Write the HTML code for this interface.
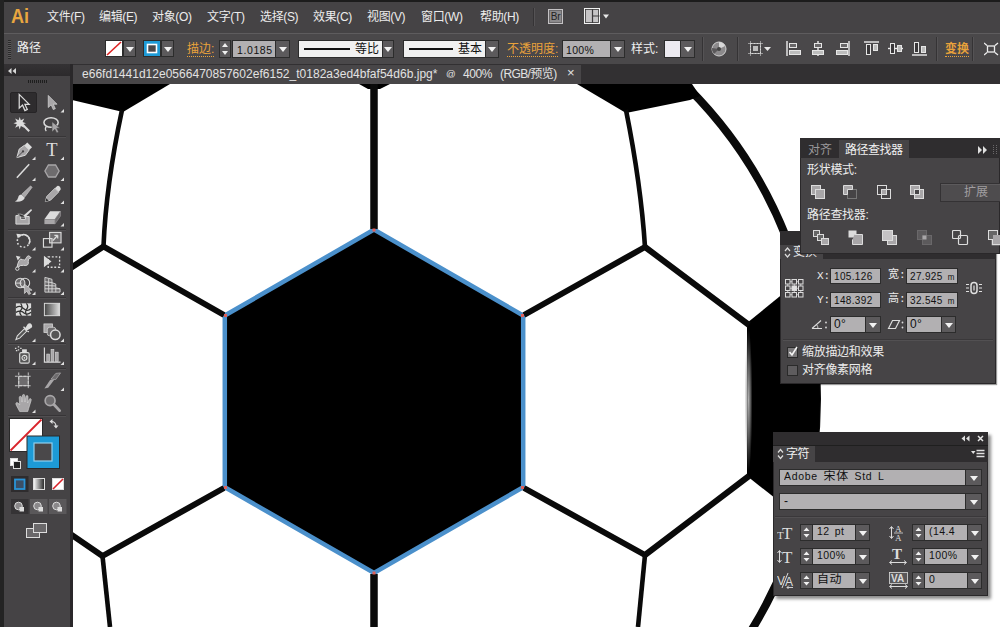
<!DOCTYPE html>
<html lang="zh"><head><meta charset="utf-8"><title>Adobe Illustrator</title>
<style>
*{box-sizing:border-box;margin:0;padding:0}
html,body{width:1000px;height:627px;overflow:hidden;background:#fff}
body{position:relative;font-family:"Liberation Sans","Noto Sans CJK SC",sans-serif;font-size:12px;color:#e6e6e6}
.abs{position:absolute}
.t{position:absolute;white-space:nowrap;line-height:16px}
#menubar{left:0;top:0;width:1000px;height:33px;background:#454345;border-top:2px solid #1c1c1c}
#ctrlbar{left:0;top:33px;width:1000px;height:31px;background:#4a484a;border-top:1px solid #5e5c5e}
#tabbar{left:0;top:64px;width:1000px;height:20px;background:#323032}
#doctab{left:73px;top:65px;width:508px;height:19px;background:#484648}
#leftedge{left:0;top:0;width:4px;height:627px;background:#232323}
#tools{left:4px;top:64px;width:66px;height:563px;background:#454345}
#toolshead{left:4px;top:64px;width:66px;height:12px;background:linear-gradient(#343234,#2c2a2c)}
#toolgap{left:70px;top:64px;width:3px;height:563px;background:#2a282a}
.or{color:#e9a23b;border-bottom:1px dotted #e9a23b;line-height:13px}
.inp{position:absolute;background:#b2b0b2;color:#111;border:1px solid #2c2c2c;white-space:nowrap;overflow:hidden}
.dd{position:absolute;background:#5c5a5c;border:1px solid #2c2c2c}
.dd:after{content:"";position:absolute;left:50%;top:50%;margin:-2px 0 0 -4px;border:4px solid transparent;border-top:5px solid #f2f2f2;border-bottom:0}
.sep{position:absolute;width:1px;background:#353335;border-right:1px solid #555355;box-sizing:content-box}
.panel{position:absolute;background:#464446;box-shadow:inset 0 0 0 1px #2a282a}
.m{top:9px;font-size:12px;color:#ececec;letter-spacing:-0.35px}
.lab{font:11px/16px 'Liberation Mono','Noto Sans CJK SC',monospace;color:#ececec}
.ss{display:inline-block;position:relative;top:0.5px;font:10px/14px 'Liberation Sans',sans-serif;letter-spacing:.35px;transform:scaleY(1.1);transform-origin:0 50%}
.ss b{display:inline-block;font:normal 12px/12px 'Noto Sans CJK SC',sans-serif;transform:scaleY(.9);vertical-align:-0.300px}
.tb{top:66px;font-size:12px;color:#e2e2e2}
</style></head><body>
<!--CANVAS-->
<svg class="abs" style="left:72px;top:84px" width="928" height="543" viewBox="72 84 928 543">
<defs><clipPath id="ball"><circle cx="377" cy="399" r="443"/></clipPath></defs>
<rect x="72" y="84" width="928" height="543" fill="#fff"/>
<circle cx="377" cy="399" r="440" fill="none" stroke="#0a0a0a" stroke-width="8"/>
<g fill="#000">
<polygon points="72,84 170,84 123,112 72,100"/>
<polygon points="577,84 692,84 700,96 690,100 626,113"/>
<polygon points="359,84 390,84 380,89 368,89"/>
<polygon clip-path="url(#ball)" points="747,323 795,284 840,284 840,510 790,510 747,476"/>
<polygon points="224.800,315.500 374,229.600 523.200,315.500 523.200,487.200 374,573 224.800,487.200" stroke="#4b90cb" stroke-width="4.500"/>
</g>
<g fill="none" stroke="#0a0a0a" stroke-width="6" stroke-linejoin="round">
<path d="M374,84V229M374,574V627" stroke-width="7.5"/>
<path d="M224,315L103.500,246.500L60,275"/>
<path d="M524,315L645,247L749,325"/>
<path d="M224,488L102.500,556L60,527"/>
<path d="M524,488L645,555L749,476"/>
<g stroke-width="4.600">
<path d="M122,110Q106,185 103.500,246.500"/>
<path d="M626,110Q641,185 645,247"/>
<path d="M102.500,556L110,627"/>
<path d="M645,555L638,627"/>
</g>
</g>
<defs><radialGradient id="hl"><stop offset="0" stop-color="#b8b8b8" stop-opacity=".95"/><stop offset=".5" stop-color="#9a9a9a" stop-opacity=".6"/><stop offset="1" stop-color="#888" stop-opacity="0"/></radialGradient></defs><ellipse cx="748.500" cy="400" rx="4" ry="72" fill="url(#hl)"/>
<g fill="#e0605a"><rect x="372.5" y="228.5" width="3" height="3"/><rect x="521" y="314" width="3" height="3"/><rect x="521" y="486" width="3" height="3"/><rect x="372.5" y="571.5" width="3" height="3"/><rect x="224" y="486" width="3" height="3"/><rect x="224" y="314" width="3" height="3"/></g>
</svg>
<!--CHROME-->
<div class="abs" id="menubar"></div>
<div class="abs" id="ctrlbar"></div>
<div class="abs" id="tabbar"></div>
<div class="abs" id="doctab"></div>
<div class="abs" id="tools"></div>
<div class="abs" id="toolshead"></div>
<div class="abs" id="toolgap"></div>
<div class="abs" id="leftedge"></div>
<!--MENU-->
<div class="t" style="left:11px;top:2.500px;font:bold 21px/26px 'Liberation Sans',sans-serif;color:#e8a640;transform:scaleX(.86);transform-origin:0 0">Ai</div>
<div class="t m" style="left:47px">文件(F)</div>
<div class="t m" style="left:99px">编辑(E)</div>
<div class="t m" style="left:152px">对象(O)</div>
<div class="t m" style="left:207px">文字(T)</div>
<div class="t m" style="left:260px">选择(S)</div>
<div class="t m" style="left:313px">效果(C)</div>
<div class="t m" style="left:367px">视图(V)</div>
<div class="t m" style="left:421px">窗口(W)</div>
<div class="t m" style="left:480px">帮助(H)</div>
<div class="sep" style="left:533px;top:8px;height:18px"></div>
<div class="abs" style="left:548px;top:9px;width:15px;height:15px;background:#8c8a8c;border:1px solid #c4c2c4;box-shadow:inset 0 0 0 1px #6a686a;color:#222;font:10px/13px 'Liberation Sans',sans-serif;text-align:center;letter-spacing:-0.3px">Br</div>
<svg class="abs" style="left:584px;top:8px" width="28" height="17" viewBox="0 0 28 17"><rect x="0.500" y="0.500" width="15" height="15" fill="#c6c4c6" stroke="#f2f2f2"/><path d="M8.500,1v14M8.500,8h7" stroke="#3a383a" stroke-width="1.200"/><rect x="1.500" y="1.500" width="13" height="13" fill="none" stroke="#3a383a" stroke-width="0.800"/><path d="M19,6.500h6l-3,4z" fill="#e8e8e8"/></svg>
<!--CTRL-->
<div class="abs" style="left:8px;top:40px;width:3px;height:19px;background:repeating-linear-gradient(#2a2a2a 0 1px,#5a585a 1px 2px)"></div>
<div class="t" style="left:17px;top:40px;font-size:12px;color:#f0f0f0">路径</div>
<svg class="abs" style="left:105px;top:40px" width="18" height="17"><rect x="0.5" y="0.5" width="17" height="16" fill="#fff" stroke="#2c2c2c"/><path d="M2,15L16,2" stroke="#d22" stroke-width="1.6"/></svg>
<div class="dd" style="left:123px;top:40px;width:13px;height:17px"></div>
<svg class="abs" style="left:143px;top:40px" width="18" height="17"><rect x="0.5" y="0.5" width="17" height="16" fill="#1d9ad6" stroke="#2c2c2c"/><rect x="4.5" y="4.5" width="9" height="8" fill="#4a484a" stroke="#fff" stroke-width="1.6"/></svg>
<div class="dd" style="left:161px;top:40px;width:13px;height:17px"></div>
<div class="t or" style="left:187px;top:43px">描边:</div>
<div class="abs" style="left:219px;top:40px;width:12px;height:18px;background:#5c5a5c;border:1px solid #2c2c2c"></div>
<svg class="abs" style="left:219px;top:40px" width="12" height="18"><path d="M3,7l3,-4l3,4zM3,11l3,4l3,-4z" fill="#f0f0f0"/></svg>
<div class="inp" style="left:232px;top:40px;width:44px;height:18px;padding-left:4px;line-height:16px"><span class="ss" style="font-size:10.500px;letter-spacing:.6px">1.0185</span></div>
<div class="dd" style="left:275px;top:40px;width:15px;height:18px"></div>
<div class="inp" style="left:298px;top:40px;width:85px;height:18px;background:#f0f0f0"><i class="abs" style="left:5px;top:7px;width:46px;height:2px;background:#111"></i><span class="t" style="left:56px;top:0;color:#111;font-size:12px">等比</span></div>
<div class="dd" style="left:382px;top:40px;width:12px;height:18px"></div>
<div class="inp" style="left:403px;top:40px;width:83px;height:18px;background:#f0f0f0"><i class="abs" style="left:5px;top:7px;width:44px;height:2px;background:#111"></i><span class="t" style="left:54px;top:0;color:#111;font-size:12px">基本</span></div>
<div class="dd" style="left:485px;top:40px;width:14px;height:18px"></div>
<div class="t or" style="left:507px;top:43px">不透明度:</div>
<div class="inp" style="left:562px;top:40px;width:49px;height:18px;line-height:16px;padding-left:3px"><span class="ss" style="font-size:10.500px;letter-spacing:.3px">100%</span></div>
<div class="dd" style="left:610px;top:40px;width:15px;height:18px"></div>
<div class="t" style="left:631px;top:41px;color:#f0f0f0">样式:</div>
<div class="inp" style="left:664px;top:40px;width:17px;height:18px;background:#eceaf0"></div>
<div class="dd" style="left:680px;top:40px;width:15px;height:18px"></div>
<div class="sep" style="left:702px;top:37px;height:24px"></div>
<svg class="abs" style="left:711px;top:41px" width="16" height="16"><circle cx="8" cy="8" r="7" fill="#8c8a8c" stroke="#cfcfcf" stroke-width="1"/><path d="M8,8L8,1A7,7 0 0 1 14,5z" fill="#d8d8d8"/><path d="M8,8L3,13A7,7 0 0 1 1,7z" fill="#5a585a"/><circle cx="8" cy="8" r="2" fill="#444"/></svg>
<div class="sep" style="left:737px;top:37px;height:24px"></div>
<svg class="abs" style="left:748px;top:41px" width="24" height="16"><rect x="2.5" y="2.5" width="10" height="10" fill="none" stroke="#e6e6e6" stroke-dasharray="2 1"/><rect x="5" y="5" width="5" height="5" fill="#bdbdbd"/><path d="M0,2.5h15M0,12.5h15M2.5,0v15M12.5,0v15" stroke="#d0d0d0" stroke-width="0.6"/><path d="M16,6h7l-3.5,4z" fill="#e8e8e8"/></svg>
<svg class="abs" style="left:786px;top:41px" width="16" height="16"><path d="M1,0v15" stroke="#eee" stroke-width="1.4"/><rect x="3.5" y="2.5" width="7" height="4" fill="#6a686a" stroke="#e6e6e6"/><rect x="3.5" y="9.500" width="11" height="4" fill="#bdbdbd" stroke="#e6e6e6"/></svg>
<svg class="abs" style="left:811px;top:41px" width="14" height="16"><path d="M7,0v15" stroke="#eee" stroke-width="1.4"/><rect x="3.500" y="2.500" width="7" height="4" fill="#6a686a" stroke="#e6e6e6"/><rect x="1.500" y="9.500" width="11" height="4" fill="#bdbdbd" stroke="#e6e6e6"/></svg>
<svg class="abs" style="left:835px;top:41px" width="16" height="16"><path d="M14,0v15" stroke="#eee" stroke-width="1.4"/><rect x="5.500" y="2.500" width="7" height="4" fill="#6a686a" stroke="#e6e6e6"/><rect x="1.500" y="9.500" width="11" height="4" fill="#bdbdbd" stroke="#e6e6e6"/></svg>
<svg class="abs" style="left:864px;top:41px" width="16" height="16"><path d="M0,1h15" stroke="#eee" stroke-width="1.4"/><rect x="2.500" y="3.500" width="4" height="10" fill="#3a383a" stroke="#e6e6e6"/><rect x="9.500" y="3.500" width="4" height="6" fill="#bdbdbd" stroke="#e6e6e6"/></svg>
<svg class="abs" style="left:888px;top:41px" width="16" height="16"><path d="M0,7.500h15" stroke="#eee" stroke-width="1.400"/><rect x="2.500" y="2.500" width="4" height="10" fill="#3a383a" stroke="#e6e6e6"/><rect x="9.500" y="4.500" width="4" height="6" fill="#bdbdbd" stroke="#e6e6e6"/></svg>
<svg class="abs" style="left:912px;top:41px" width="16" height="16"><path d="M0,14h15" stroke="#eee" stroke-width="1.400"/><rect x="2.500" y="1.500" width="4" height="10" fill="#3a383a" stroke="#e6e6e6"/><rect x="9.500" y="5.500" width="4" height="6" fill="#bdbdbd" stroke="#e6e6e6"/></svg>
<div class="sep" style="left:936px;top:37px;height:24px"></div>
<div class="t or" style="left:945px;top:43px;font-weight:bold">变换</div>
<div class="sep" style="left:972px;top:37px;height:24px"></div>
<svg class="abs" style="left:984px;top:42px" width="16" height="14"><rect x="3.500" y="4" width="7" height="6" fill="none" stroke="#eee" stroke-width="1.300"/><path d="M0,1l3,2.500M14,1l-3,2.500M0,13l3,-2.500M14,13l-3,-2.500" stroke="#eee" stroke-width="1.300"/></svg>
<!--TAB-->
<div class="t tb" id="tabtxt" style="left:82px;letter-spacing:0.02px">e66fd1441d12e0566470857602ef6152_t0182a3ed4bfaf54d6b.jpg*</div>
<div class="t tb" style="left:446px;font-size:9.500px">@</div>
<div class="t tb" style="left:463px;letter-spacing:-0.4px">400%</div>
<div class="t tb" id="tabtxt2" style="left:500px;letter-spacing:-0.6px">(RGB/预览)</div>
<div class="t" style="left:567px;top:65px;font-size:13px;color:#e2e2e2">×</div>
<!--TOOLS-->
<svg class="abs" style="left:0;top:64px" width="73" height="563" viewBox="0 64 73 563">
<path d="M8,71l3.500,-3v6zM12.500,71l3.500,-3v6z" fill="#d8d8d8"/>
<path d="M28,81.500h19" stroke="#1e1e1e" stroke-width="3" stroke-dasharray="1 1"/>
<rect x="10.500" y="92.500" width="26" height="20" rx="1.500" fill="#2e2c2e" stroke="#262426"/>
<path d="M8,136.5h58" stroke="#373537"/><path d="M8,137.5h58" stroke="#514f51"/>
<path d="M8,229.5h58" stroke="#373537"/><path d="M8,230.5h58" stroke="#514f51"/>
<path d="M8,297.5h58" stroke="#373537"/><path d="M8,298.5h58" stroke="#514f51"/>
<path d="M8,343.5h58" stroke="#373537"/><path d="M8,344.5h58" stroke="#514f51"/>
<path d="M8,368.5h58" stroke="#373537"/><path d="M8,369.5h58" stroke="#514f51"/>
<path d="M8,415.5h58" stroke="#373537"/><path d="M8,416.5h58" stroke="#514f51"/>
<g transform="translate(23.5,102.5) scale(0.95)"><path d="M-4.5,-8.500L-4.500,6L-1,2.800L1.500,8.500L4,7.400L1.500,2L6,2Z" fill="#2e2c2e" stroke="#dcdcdc" stroke-width="1.300" stroke-linejoin="miter"/></g>
<g transform="translate(52,102.5) scale(0.95)"><path transform="scale(.88)" d="M-4.500,-8.500L-4.500,6L-1,2.800L1.500,8.500L4,7.400L1.500,2L6,2Z" fill="#a8a6a8" stroke="#dcdcdc" stroke-width="0.800"/></g>
<path d="M64,109.0v3.500h-3.500z" fill="#e0e0e0"/>
<g transform="translate(23.5,124.5) scale(0.95)"><path d="M-2,-1L6,7" stroke="#dcdcdc" stroke-width="2.200"/><path d="M-4,-3m0,-5.500l1.200,3.600l3.600,-1.800l-1.800,3.600l3.600,1.200l-3.600,1.200l1.800,3.600l-3.600,-1.800l-1.200,3.600l-1.200,-3.600l-3.600,1.800l1.800,-3.600l-3.600,-1.200l3.600,-1.200l-1.800,-3.600l3.600,1.800z" fill="#dcdcdc" transform="scale(1) translate(0,0.500)"/></g>
<g transform="translate(52,124.5) scale(0.95)"><ellipse cx="-1" cy="-2" rx="7.500" ry="5" fill="none" stroke="#dcdcdc" stroke-width="1.600"/><path d="M-6,2q-2,3 0,5" fill="none" stroke="#dcdcdc" stroke-width="1.300"/><path d="M0,-3L0,8L3,5L5,9L7,8L5,4L8.500,4Z" fill="#a8a6a8" stroke="#454345" stroke-width="0.600"/></g>
<g transform="translate(23.5,150) scale(0.95)"><path d="M-7,8L-4.500,-1L1,-5L6,0L2,5.500Z" fill="#a8a6a8" stroke="#dcdcdc" stroke-width="1"/><path d="M1,-5L4,-8L9,-3L6,0Z" fill="#dcdcdc"/><path d="M-7,8L-1,2" stroke="#454345" stroke-width="1"/><circle cx="-0.500" cy="1.500" r="1.200" fill="#454345"/></g>
<path d="M35.5,156.5v3.500h-3.500z" fill="#e0e0e0"/>
<g transform="translate(52,150) scale(0.95)"><text x="0" y="6.500" text-anchor="middle" font-family="Liberation Serif,serif" font-size="19.500" fill="#dcdcdc">T</text></g>
<path d="M64,156.5v3.500h-3.500z" fill="#e0e0e0"/>
<g transform="translate(23.5,171) scale(0.95)"><path d="M-7,7L6,-7" stroke="#dcdcdc" stroke-width="1.600"/></g>
<path d="M35.5,177.5v3.500h-3.500z" fill="#e0e0e0"/>
<g transform="translate(52,171) scale(0.95)"><path transform="scale(.88)" d="M-8.500,0L-4.300,-7.200L4.300,-7.200L8.500,0L4.300,7.200L-4.300,7.200Z" fill="#6e6c6e" stroke="#a8a6a8" stroke-width="1.600"/></g>
<path d="M64,177.5v3.500h-3.500z" fill="#e0e0e0"/>
<g transform="translate(23.5,194) scale(0.95)"><path d="M7.500,-8.500L-1.500,0L1.500,3L9,-7Z" fill="#a8a6a8" stroke="#dcdcdc" stroke-width="0.600"/><path d="M-2,0.500L1.500,4Q-1,9 -9,8Q-6,6.500 -5.500,3.500Q-5,0.500 -2,0.500Z" fill="#dcdcdc"/></g>
<g transform="translate(52,194) scale(0.95)"><path d="M-7,8L-5.500,2.500L3,-6L7,-2L-1.500,6.500Z" fill="#a8a6a8" stroke="#dcdcdc" stroke-width="0.800"/><path d="M3,-6L5.500,-8.500Q7,-9 8.500,-7.500Q9.500,-6 9,-4.500L7,-2Z" fill="#dcdcdc"/><path d="M-7,8L-6,4.500L-3.500,7Z" fill="#333"/></g>
<path d="M64,200.5v3.500h-3.500z" fill="#e0e0e0"/>
<g transform="translate(23.5,216.5) scale(0.95)"><path d="M-8,-1L-8,8L6,8L6,0L2,0L2,3L-3,3L-3,-1Z" fill="#a8a6a8" stroke="#dcdcdc" stroke-width="1"/><path d="M8,-8L0,-1L1.500,1L9,-6.500Z" fill="#dcdcdc"/><path d="M0,-1.500Q-3,-3 -6,-2.500Q-3,2 1.500,1Z" fill="#333" stroke="#dcdcdc" stroke-width="0.600"/></g>
<g transform="translate(52,216.5) scale(0.95)"><path d="M-8,3L-2,-5.500L9,-5.500L3,3Z" fill="#dcdcdc"/><path d="M-8,3L3,3L3,8L-8,8Z" fill="#a8a6a8"/><path d="M3,3L9,-5.500L9,-0.500L3,8Z" fill="#6e6c6e" stroke="#a8a6a8" stroke-width="0.500"/></g>
<path d="M64,223.0v3.500h-3.500z" fill="#e0e0e0"/>
<g transform="translate(23.5,240.5) scale(0.95)"><circle cx="0" cy="0.500" r="6.500" fill="none" stroke="#dcdcdc" stroke-width="1.600" stroke-dasharray="1.800 2.200"/><path d="M-4,-4.700A6.500,6.500 0 0 1 5.600,3.800" fill="none" stroke="#dcdcdc" stroke-width="1.700"/><path d="M-7.500,-7L-2.500,-6.500L-6,-2Z" fill="#dcdcdc"/></g>
<path d="M35.5,247.0v3.500h-3.500z" fill="#e0e0e0"/>
<g transform="translate(52,240.5) scale(0.95)"><rect x="-2.500" y="-8.500" width="12" height="11" fill="#6e6c6e" stroke="#dcdcdc" stroke-width="1.200"/><rect x="-9" y="-2" width="9" height="9" fill="none" stroke="#dcdcdc" stroke-width="1.200"/><path d="M1,0L6,-5.500M6,-5.500h-3.500M6,-5.500v3.500" stroke="#dcdcdc" stroke-width="1.300" fill="none"/></g>
<path d="M64,247.0v3.500h-3.500z" fill="#e0e0e0"/>
<g transform="translate(23.5,262.5) scale(0.95)"><path d="M-7,6Q-5,-6 -1,-3Q2,-1 3,-5Q5,-9 8,-5Q4,-4 5,-1Q6,4 0,3Q-3,2 -7,6Z" fill="#a8a6a8" stroke="#dcdcdc" stroke-width="1"/><circle cx="-6.500" cy="6.500" r="1.800" fill="#454345" stroke="#dcdcdc" stroke-width="1"/><path d="M-8,-7l2,5l3,-4z" fill="#dcdcdc"/></g>
<path d="M35.5,269.0v3.500h-3.500z" fill="#e0e0e0"/>
<g transform="translate(52,262.5) scale(0.95)"><rect x="-4" y="-6" width="12" height="11" fill="none" stroke="#dcdcdc" stroke-width="1.400" stroke-dasharray="2 1.800"/><path d="M-8.500,-7L-8.500,5L-5.500,2.500L-0.500,-1Z" fill="#dcdcdc"/></g>
<path d="M64,269.0v3.500h-3.500z" fill="#e0e0e0"/>
<g transform="translate(23.5,285) scale(0.95)"><circle cx="-3.500" cy="-2" r="5" fill="#6e6c6e" stroke="#dcdcdc" stroke-width="1.100"/><circle cx="1.500" cy="-2" r="5" fill="none" stroke="#dcdcdc" stroke-width="1.100"/><path d="M-8,-2h6" stroke="#dcdcdc" stroke-width="1"/><path d="M1,-1L1,9L3.500,6.500L5.500,10L7.500,9L5.500,5.500L9,5.500Z" fill="#a8a6a8" stroke="#dcdcdc" stroke-width="0.700"/></g>
<path d="M35.5,291.5v3.500h-3.500z" fill="#e0e0e0"/>
<g transform="translate(52,285) scale(0.95)"><path d="M-7.500,-8V7.500H8.500L8.500,4L4,3V-1L0,-2.500V-6L-3.500,-7Z" fill="#6e6c6e" stroke="#dcdcdc" stroke-width="0.900"/><path d="M-3.500,-7V7.500M0,-2.500V7.500M4,3V7.500M-7.500,-3.500L0,-2.500M-7.500,0.500L4,1M-7.500,4L8.500,4" stroke="#dcdcdc" stroke-width="0.900" fill="none"/></g>
<path d="M64,291.5v3.500h-3.500z" fill="#e0e0e0"/>
<g transform="translate(23.5,309.5) scale(0.95)"><rect x="-8" y="-6.500" width="16" height="13" fill="#dcdcdc"/><path d="M-8,-2Q-3,-5 0,-1Q4,3 8,-1M-8,3Q-3,0 1,4Q4,6 8,3M-3,-6.500Q0,-2 -3,1Q-5,4 -2,6.500M3,-6.500Q6,-3 3,0Q1,3 4,6.500" fill="none" stroke="#333" stroke-width="1.300"/></g>
<g transform="translate(52,309.5) scale(0.95)"><defs><linearGradient id="gg" x1="0" x2="1"><stop offset="0" stop-color="#444"/><stop offset="1" stop-color="#ddd"/></linearGradient></defs><rect x="-8" y="-6.500" width="16" height="13" fill="url(#gg)" stroke="#dcdcdc" stroke-width="1"/></g>
<g transform="translate(23.5,332) scale(0.95)"><path d="M-8,8L-6.500,4L1,-3.500L3.500,-1L-4,6.500Z" fill="#555" stroke="#dcdcdc" stroke-width="1.100"/><path d="M0,-5.500L5.500,0M2,-3L5,-8Q7,-9 8,-7.500Q9,-6 8,-5L3,-2Z" fill="#dcdcdc" stroke="#dcdcdc" stroke-width="1.400"/></g>
<path d="M35.5,338.5v3.500h-3.500z" fill="#e0e0e0"/>
<g transform="translate(52,332) scale(0.95)"><rect x="-8.500" y="-8.500" width="9" height="9" fill="#a8a6a8" stroke="#dcdcdc" stroke-width="0.800"/><rect x="-5" y="-5" width="9" height="9" rx="2.500" fill="#6e6c6e" stroke="#dcdcdc" stroke-width="0.800"/><circle cx="3.500" cy="3" r="5" fill="#555" stroke="#dcdcdc" stroke-width="1.600"/></g>
<path d="M64,338.5v3.500h-3.500z" fill="#e0e0e0"/>
<g transform="translate(23.5,355) scale(0.95)"><rect x="-4" y="-2.500" width="10" height="11" rx="1.500" fill="#555" stroke="#dcdcdc" stroke-width="1.200"/><rect x="-1.500" y="-6" width="5" height="3.500" fill="#dcdcdc"/><circle cx="1" cy="3" r="2.600" fill="none" stroke="#dcdcdc" stroke-width="1.200"/><circle cx="1" cy="3" r="0.900" fill="#dcdcdc"/><path d="M-9,-7h1.500M-6,-8.500h1.500M-6,-5.500h1.500M-3.500,-7h1.500M-8,-4.500h1.500" stroke="#dcdcdc" stroke-width="1.300"/></g>
<path d="M35.5,361.5v3.500h-3.500z" fill="#e0e0e0"/>
<g transform="translate(52,355) scale(0.95)"><path d="M-8,-8V7.500H9" fill="none" stroke="#dcdcdc" stroke-width="1.200"/><rect x="-5.500" y="-1" width="3" height="8" fill="#a8a6a8" stroke="#dcdcdc" stroke-width="0.600"/><rect x="-1" y="-6" width="3" height="13" fill="#a8a6a8" stroke="#dcdcdc" stroke-width="0.600"/><rect x="3.500" y="-3" width="3" height="10" fill="#a8a6a8" stroke="#dcdcdc" stroke-width="0.600"/></g>
<path d="M64,361.5v3.500h-3.500z" fill="#e0e0e0"/>
<g transform="translate(23.5,381) scale(0.95)"><rect x="-5" y="-5" width="10" height="10" fill="#6e6c6e" stroke="#dcdcdc" stroke-width="0.800"/><path d="M-9,-5h18M-9,5h18M-5,-9v18M5,-9v18" stroke="#dcdcdc" stroke-width="0.900" stroke-dasharray="3 1.500"/></g>
<g transform="translate(52,381) scale(0.95)"><path d="M-8,8L-2,-1L3,-2L-4,7Z" fill="#a8a6a8"/><path d="M-1,-2L4,-8L9,-8.500L4,-1.500Z" fill="#6e6c6e" stroke="#a8a6a8" stroke-width="0.800"/></g>
<path d="M64,387.5v3.500h-3.500z" fill="#e0e0e0"/>
<g transform="translate(23.5,403) scale(0.95)"><path d="M-4,9L-7.500,2.500Q-9,0 -7,-0.500Q-5.500,-0.500 -4,2L-4.500,-5.500Q-4.500,-7 -3.300,-7Q-2.200,-7 -2,-5.500L-1.500,-1L-1.200,-7.500Q-1,-9 0.200,-9Q1.300,-9 1.300,-7.500L1.500,-1L2.500,-6.500Q2.800,-8 4,-7.800Q5,-7.500 4.800,-6L4.300,0L5.800,-3.500Q6.500,-5 7.500,-4.500Q8.500,-4 8,-2.500L5.500,5.500L4.500,9Z" fill="#a8a6a8" stroke="#dcdcdc" stroke-width="0.600"/></g>
<path d="M35.5,409.5v3.500h-3.500z" fill="#e0e0e0"/>
<g transform="translate(52,403) scale(0.95)"><circle cx="-2" cy="-2.500" r="5.200" fill="#6e6c6e" stroke="#a8a6a8" stroke-width="1.800"/><path d="M2,1.500L8,8" stroke="#a8a6a8" stroke-width="3" stroke-linecap="round"/></g>
<rect x="9.500" y="418.500" width="33" height="33" fill="#fff" stroke="#2a2a2a"/><path d="M10.500,450.500L41.500,419.500" stroke="#d9232a" stroke-width="1.800"/>
<rect x="27" y="436" width="32.500" height="32.500" fill="#1d9ad6" stroke="#2a2a2a"/><rect x="34" y="443" width="18" height="18" fill="#4a484a" stroke="#8fd0ee" stroke-width="1.200"/>
<path d="M51,421.500q5,0 5,5" fill="none" stroke="#ddd" stroke-width="1.200"/><path d="M49.500,421.500l3,-2.500v5zM56,428.500l-2.500,-3h5z" fill="#ddd"/>
<rect x="10.500" y="458.500" width="7" height="7" fill="#fff" stroke="#ddd"/><rect x="13.500" y="461.500" width="7" height="7" fill="#222" stroke="#ddd"/>
<rect x="11" y="476" width="17.500" height="16" fill="#2e2c2e"/><rect x="15" y="479.500" width="9.500" height="9.500" fill="#3b4f66" stroke="#2a94d8" stroke-width="1.800"/>
<defs><linearGradient id="g2" x1="0" x2="1"><stop offset="0" stop-color="#fff"/><stop offset="1" stop-color="#222"/></linearGradient></defs><rect x="33.500" y="478.500" width="11" height="11" fill="url(#g2)" stroke="#ddd"/>
<rect x="52.500" y="478.500" width="11" height="11" fill="#fff" stroke="#ddd"/><path d="M53,489L63,479" stroke="#d9232a" stroke-width="1.600"/>
<rect x="11" y="499" width="17.500" height="15" fill="#353335"/><rect x="30" y="499" width="17.500" height="15" fill="#5a585a"/><rect x="49" y="499" width="17.500" height="15" fill="#5a585a"/>
<circle cx="18.5" cy="506" r="3.800" fill="#8a888a" stroke="#ddd" stroke-width="1"/><rect x="19.5" y="507" width="4.500" height="4.500" fill="#ddd"/>
<circle cx="37.5" cy="506" r="3.800" fill="#8a888a" stroke="#ddd" stroke-width="1"/><rect x="38.5" y="507" width="4.500" height="4.500" fill="#ddd"/>
<circle cx="56.5" cy="506" r="3.800" fill="#8a888a" stroke="#ddd" stroke-width="1"/><rect x="57.5" y="507" width="4.500" height="4.500" fill="#ddd"/>
<rect x="26.500" y="528.500" width="13" height="9" fill="#6a686a" stroke="#ddd"/><rect x="33.500" y="523.500" width="13" height="9" fill="#6a686a" stroke="#ddd"/>
</svg>
<!--PANELS-->
<div class="panel" style="left:780px;top:231px;width:216px;height:153px;box-shadow:inset 0 0 0 1px #2a282a,1px 1px 1px rgba(0,0,0,.4)"></div>
<div class="abs" style="left:780px;top:231px;width:216px;height:28px;background:#2f2d2f"></div>
<div class="abs" style="left:780px;top:245px;width:43px;height:14px;background:#464446"></div>
<svg class="abs" style="left:784px;top:247px" width="7" height="11"><path d="M1,4l2.500,-3l2.500,3M1,7l2.500,3l2.500,-3" fill="none" stroke="#ddd" stroke-width="1.200"/></svg>
<div class="t" style="left:793px;top:244px;font-size:12px;color:#e8e8e8">变换</div>
<svg class="abs" style="left:784px;top:278px" width="21" height="21"><rect x="1.5" y="1.5" width="4.500" height="4.500" fill="none" stroke="#dcdcdc" stroke-width="1"/><rect x="8.0" y="1.5" width="4.500" height="4.500" fill="none" stroke="#dcdcdc" stroke-width="1"/><rect x="14.5" y="1.5" width="4.500" height="4.500" fill="none" stroke="#dcdcdc" stroke-width="1"/><rect x="1.5" y="8.0" width="4.500" height="4.500" fill="none" stroke="#dcdcdc" stroke-width="1"/><rect x="8.0" y="8.0" width="4.500" height="4.500" fill="#e0e0e0" stroke="#dcdcdc" stroke-width="1"/><rect x="14.5" y="8.0" width="4.500" height="4.500" fill="none" stroke="#dcdcdc" stroke-width="1"/><rect x="1.5" y="14.5" width="4.500" height="4.500" fill="none" stroke="#dcdcdc" stroke-width="1"/><rect x="8.0" y="14.5" width="4.500" height="4.500" fill="none" stroke="#dcdcdc" stroke-width="1"/><rect x="14.5" y="14.5" width="4.500" height="4.500" fill="none" stroke="#dcdcdc" stroke-width="1"/><path d="M6,3.750h2M12.500,3.750h2M6,10.250h2M12.500,10.250h2M6,16.750h2M12.500,16.750h2M3.750,6v2M3.750,12.500v2M10.250,6v2M10.250,12.500v2M16.750,6v2M16.750,12.500v2" stroke="#dcdcdc" stroke-width="0.800"/></svg>
<div class="t lab" style="left:817px;top:268px">X:</div>
<div class="inp" style="left:830px;top:268px;width:51px;height:16px;font:10px/14px 'Liberation Mono',monospace;padding-left:3px"><span class="ss">105.126</span></div>
<div class="t lab" style="left:888px;top:267px">宽:</div>
<div class="inp" style="left:906px;top:268px;width:52px;height:16px;font:10px/14px 'Liberation Mono',monospace;padding-left:3px"><span class="ss" style="word-spacing:2px">27.925 <span style="font-size:8px">m</span></span></div>
<div class="t lab" style="left:817px;top:292px">Y:</div>
<div class="inp" style="left:830px;top:292px;width:51px;height:16px;font:10px/14px 'Liberation Mono',monospace;padding-left:3px"><span class="ss">148.392</span></div>
<div class="t lab" style="left:888px;top:291px">高:</div>
<div class="inp" style="left:906px;top:292px;width:52px;height:16px;font:10px/14px 'Liberation Mono',monospace;padding-left:3px"><span class="ss" style="word-spacing:2px">32.545 <span style="font-size:8px">m</span></span></div>
<svg class="abs" style="left:965px;top:280px" width="18" height="16"><rect x="6" y="2.500" width="6" height="11" rx="3" fill="none" stroke="#e0e0e0" stroke-width="1.500"/><path d="M9,5.500v5" stroke="#e0e0e0" stroke-width="1.200"/><path d="M1,4.500h3M1,8h3M1,11.500h3M14,4.500h3M14,8h3M14,11.500h3" stroke="#e0e0e0" stroke-width="1.100"/></svg>
<svg class="abs" style="left:811px;top:318px" width="18" height="12"><path d="M1,10.500L10,2.500M1,10.500H11" fill="none" stroke="#dcdcdc" stroke-width="1.100"/><path d="M7,10.500A6,6 0 0 0 5.500,6.500" fill="none" stroke="#dcdcdc" stroke-width="0.900"/><circle cx="15" cy="4.500" r="0.900" fill="#dcdcdc"/><circle cx="15" cy="9.500" r="0.900" fill="#dcdcdc"/></svg>
<div class="inp" style="left:830px;top:316px;width:36px;height:17px;font:10px/14px 'Liberation Mono',monospace;padding-left:3px;line-height:15px"><span class="ss" style="font-size:12px;transform:none;top:0">0°</span></div>
<div class="dd" style="left:865px;top:316px;width:16px;height:17px"></div>
<svg class="abs" style="left:887px;top:318px" width="18" height="12"><path d="M1.500,10.500L5.500,2.500H12.500L8.500,10.500Z" fill="none" stroke="#dcdcdc" stroke-width="1.200"/><circle cx="15.500" cy="4.500" r="0.900" fill="#dcdcdc"/><circle cx="15.500" cy="9.500" r="0.900" fill="#dcdcdc"/></svg>
<div class="inp" style="left:906px;top:316px;width:36px;height:17px;font:10px/14px 'Liberation Mono',monospace;padding-left:3px;line-height:15px"><span class="ss" style="font-size:12px;transform:none;top:0">0°</span></div>
<div class="dd" style="left:941px;top:316px;width:15px;height:17px"></div>
<div class="abs" style="left:783px;top:339px;width:210px;height:2px;background:#3a383a;border-bottom:1px solid #525052"></div>
<svg class="abs" style="left:787px;top:346px" width="12" height="12"><rect x="0.500" y="1.500" width="10" height="10" fill="#7a787a" stroke="#2a2a2a"/><path d="M2.500,6l2.500,3l5,-8" fill="none" stroke="#f4f4f4" stroke-width="1.600"/></svg>
<div class="t" style="left:802px;top:344px;font-size:12px;color:#ececec;letter-spacing:-0.3px">缩放描边和效果</div>
<svg class="abs" style="left:787px;top:365px" width="12" height="12"><rect x="0.500" y="0.500" width="10" height="10" fill="#5e5c5e" stroke="#2a2a2a"/></svg>
<div class="t" style="left:802px;top:362px;font-size:12px;color:#ececec;letter-spacing:-0.3px">对齐像素网格</div>
<div class="panel" style="left:800px;top:138px;width:200px;height:116px"></div>
<div class="abs" style="left:800px;top:138px;width:200px;height:20px;background:#2f2d2f"></div>
<div class="abs" style="left:839px;top:140px;width:70px;height:18px;background:#464446"></div>
<div class="t" style="left:808px;top:142px;font-size:12px;color:#9a989a">对齐</div>
<div class="t" style="left:845px;top:142px;font-size:12px;color:#f0f0f0;letter-spacing:-0.5px">路径查找器</div>
<svg class="abs" style="left:977px;top:145px" width="23" height="10"><path d="M1,1l4,4l-4,4zM6,1l4,4l-4,4z" fill="#e0e0e0"/><path d="M16.500,0v10M19.500,0v10" stroke="#6a686a" stroke-dasharray="1 1"/></svg>
<div class="t" style="left:807px;top:162px;font-size:12px;color:#ececec;letter-spacing:-0.3px">形状模式:</div>
<div class="t" style="left:807px;top:207px;font-size:12px;color:#ececec;letter-spacing:-0.3px">路径查找器:</div>
<div class="abs" style="left:940px;top:183px;width:64px;height:19px;background:#4e4c4e;border:1px solid #343234;box-shadow:inset 0 1px 0 #5c5a5c"></div>
<div class="t" style="left:964px;top:184px;font-size:12px;color:#a09ea0">扩展</div>
<svg class="abs" style="left:811px;top:185px" width="15" height="15"><rect x="0.500" y="0.500" width="9" height="9" fill="#a8a6a8" stroke="#dcdcdc"/><rect x="4.500" y="4.500" width="9" height="9" fill="#a8a6a8" stroke="#dcdcdc"/></svg>
<svg class="abs" style="left:843px;top:185px" width="15" height="15"><rect x="4.500" y="4.500" width="9" height="9" fill="none" stroke="#777"/><path d="M0.500,0.500h9v4h-5v5h-4z" fill="#a8a6a8" stroke="#dcdcdc"/></svg>
<svg class="abs" style="left:877px;top:185px" width="15" height="15"><rect x="0.500" y="0.500" width="9" height="9" fill="none" stroke="#dcdcdc"/><rect x="4.500" y="4.500" width="9" height="9" fill="none" stroke="#dcdcdc"/><rect x="4.500" y="4.500" width="5" height="5" fill="#a8a6a8" stroke="#dcdcdc"/></svg>
<svg class="abs" style="left:910px;top:185px" width="15" height="15"><rect x="0.500" y="0.500" width="9" height="9" fill="#a8a6a8" stroke="#dcdcdc"/><rect x="4.500" y="4.500" width="9" height="9" fill="#a8a6a8" stroke="#dcdcdc"/><rect x="4.500" y="4.500" width="5" height="5" fill="#464446" stroke="#dcdcdc"/></svg>
<svg class="abs" style="left:813px;top:230px" width="17" height="16"><rect x="0.500" y="0.500" width="6" height="6" fill="#666" stroke="#dcdcdc"/><rect x="4.500" y="4.500" width="6" height="6" fill="#666" stroke="#dcdcdc"/><rect x="8.500" y="8.500" width="7" height="6" fill="#a8a6a8" stroke="#dcdcdc"/></svg>
<svg class="abs" style="left:848px;top:230px" width="16" height="16"><rect x="0.500" y="0.500" width="8" height="7" fill="#dcdcdc"/><path d="M6.500,4.500h8v10h-10v-5" fill="#a8a6a8" stroke="#dcdcdc"/></svg>
<svg class="abs" style="left:882px;top:230px" width="16" height="16"><rect x="5.500" y="5.500" width="9" height="9" fill="#a8a6a8" stroke="#dcdcdc"/><rect x="0.500" y="0.500" width="10" height="10" fill="#c4c2c4" stroke="#dcdcdc"/></svg>
<svg class="abs" style="left:917px;top:230px" width="16" height="16"><rect x="0.500" y="0.500" width="9" height="9" fill="#5c5a5c" stroke="#6a686a"/><rect x="5.500" y="5.500" width="9" height="9" fill="#5c5a5c" stroke="#6a686a"/><rect x="5.500" y="5.500" width="4" height="4" fill="#a8a6a8"/></svg>
<svg class="abs" style="left:952px;top:230px" width="17" height="16"><rect x="0.500" y="0.500" width="8" height="8" rx="1" fill="none" stroke="#dcdcdc" stroke-width="1.200"/><rect x="6.500" y="5.500" width="9" height="9" rx="1" fill="none" stroke="#dcdcdc" stroke-width="1.200"/></svg>
<svg class="abs" style="left:988px;top:230px" width="12" height="16"><rect x="0.500" y="0.500" width="9" height="9" fill="#666" stroke="#dcdcdc"/><path d="M4.500,9.500v5h8" fill="none" stroke="#dcdcdc" stroke-width="1.500"/><rect x="5" y="5" width="7" height="9" fill="#a8a6a8"/></svg>
<div class="panel" style="left:773px;top:432px;width:215px;height:164px;box-shadow:inset 0 0 0 1px #2a282a,3px 3px 3px rgba(0,0,0,.45)"></div>
<div class="abs" style="left:773px;top:432px;width:215px;height:30px;background:#2f2d2f"></div>
<div class="abs" style="left:773px;top:445px;width:215px;height:1px;background:#1f1f1f"></div>
<div class="abs" style="left:773px;top:446px;width:42px;height:16px;background:#464446"></div>
<svg class="abs" style="left:777px;top:448px" width="7" height="12"><path d="M1,4.500l2.500,-3l2.500,3M1,7.500l2.500,3l2.500,-3" fill="none" stroke="#ddd" stroke-width="1.200"/></svg>
<div class="t" style="left:786px;top:446px;font-size:12px;color:#f0f0f0;letter-spacing:-0.5px">字符</div>
<svg class="abs" style="left:960px;top:434px" width="26" height="10"><path d="M5,1.500v6l-3.500,-3zM9.500,1.500v6l-3.500,-3z" fill="#e0e0e0"/><path d="M18,2l5,5M23,2l-5,5" stroke="#e8e8e8" stroke-width="1.500"/></svg>
<svg class="abs" style="left:971px;top:449px" width="14" height="10"><path d="M0,2h4.500l-2.250,3z" fill="#e0e0e0"/><path d="M5.500,1.500h8M5.500,4.500h8M5.500,7.500h8" stroke="#e0e0e0" stroke-width="1.300"/></svg>
<div class="inp" style="left:779px;top:469px;width:187px;height:17px;font:11px/15px 'Liberation Mono','Noto Sans CJK SC',monospace;padding-left:4px;letter-spacing:-0.3px"><span class="ss" style="top:-1px;font-size:10.500px;letter-spacing:.7px;word-spacing:2px">Adobe <b>宋体</b> Std L</span></div>
<div class="dd" style="left:965px;top:469px;width:17px;height:17px"></div>
<div class="inp" style="left:779px;top:493px;width:187px;height:17px;font:11px/15px 'Liberation Mono',monospace;padding-left:4px"><span class="ss" style="top:0;font-size:12px">-</span></div>
<div class="dd" style="left:965px;top:493px;width:17px;height:17px"></div>
<div class="abs" style="left:775px;top:516px;width:211px;height:2px;background:#3a383a;border-bottom:1px solid #525052"></div>
<svg class="abs" style="left:777px;top:524px" width="19" height="17"><text x="0" y="15" font-size="11" font-family="Liberation Serif,serif" fill="#dcdcdc">T</text><text x="5" y="15" font-size="17" font-family="Liberation Serif,serif" fill="#dcdcdc">T</text></svg><div class="abs" style="left:800px;top:524px;width:13px;height:17px;background:#5c5a5c;border:1px solid #2c2c2c"></div><svg class="abs" style="left:800px;top:524px" width="13" height="17"><path d="M3.500,7l3,-3.500l3,3.500zM3.500,10l3,3.500l3,-3.500z" fill="#f0f0f0"/></svg><div class="inp" style="left:812px;top:524px;width:44px;height:17px;font:11px/15px 'Liberation Mono','Noto Sans CJK SC',monospace;padding-left:4px;letter-spacing:-0.4px"><span class="ss" style="top:-1px;font-size:10.500px;letter-spacing:.4px;word-spacing:2px">12 pt</span></div><div class="dd" style="left:855px;top:524px;width:15px;height:17px"></div><svg class="abs" style="left:889px;top:524px" width="19" height="17"><text x="6" y="8" font-size="9" font-family="Liberation Serif,serif" fill="#dcdcdc">A</text><path d="M5,9h9" stroke="#dcdcdc" stroke-width="0.800"/><text x="6" y="17" font-size="9" font-family="Liberation Serif,serif" fill="#dcdcdc">A</text><path d="M2.500,3v11M0.500,5l2,-2.500l2,2.500M0.500,12l2,2.500l2,-2.500" stroke="#dcdcdc" fill="none" stroke-width="1"/></svg><div class="abs" style="left:912px;top:524px;width:13px;height:17px;background:#5c5a5c;border:1px solid #2c2c2c"></div><svg class="abs" style="left:912px;top:524px" width="13" height="17"><path d="M3.500,7l3,-3.500l3,3.500zM3.500,10l3,3.500l3,-3.500z" fill="#f0f0f0"/></svg><div class="inp" style="left:924px;top:524px;width:44px;height:17px;font:11px/15px 'Liberation Mono',monospace;padding-left:4px;letter-spacing:-0.4px"><span class="ss" style="top:-1px;font-size:10.500px;letter-spacing:.4px">(14.4</span></div><div class="dd" style="left:967px;top:524px;width:15px;height:17px"></div>
<svg class="abs" style="left:777px;top:548px" width="19" height="17"><text x="5" y="15" font-size="17" font-family="Liberation Serif,serif" fill="#dcdcdc">T</text><path d="M2.500,3v11M0.500,5l2,-2.500l2,2.500M0.500,12l2,2.500l2,-2.500" stroke="#dcdcdc" fill="none" stroke-width="1"/></svg><div class="abs" style="left:800px;top:548px;width:13px;height:17px;background:#5c5a5c;border:1px solid #2c2c2c"></div><svg class="abs" style="left:800px;top:548px" width="13" height="17"><path d="M3.500,7l3,-3.500l3,3.500zM3.500,10l3,3.500l3,-3.500z" fill="#f0f0f0"/></svg><div class="inp" style="left:812px;top:548px;width:44px;height:17px;font:11px/15px 'Liberation Mono','Noto Sans CJK SC',monospace;padding-left:4px;letter-spacing:-0.4px"><span class="ss" style="top:-1px;font-size:10.500px;letter-spacing:.4px;word-spacing:2px">100%</span></div><div class="dd" style="left:855px;top:548px;width:15px;height:17px"></div><svg class="abs" style="left:889px;top:548px" width="19" height="17"><text x="3" y="11" font-size="15" font-weight="bold" font-family="Liberation Serif,serif" fill="#dcdcdc">T</text><path d="M1,14.500h16M3,12.500l-2.500,2l2.500,2M15,12.500l2.500,2l-2.500,2" stroke="#dcdcdc" fill="none" stroke-width="1"/></svg><div class="abs" style="left:912px;top:548px;width:13px;height:17px;background:#5c5a5c;border:1px solid #2c2c2c"></div><svg class="abs" style="left:912px;top:548px" width="13" height="17"><path d="M3.500,7l3,-3.500l3,3.500zM3.500,10l3,3.500l3,-3.500z" fill="#f0f0f0"/></svg><div class="inp" style="left:924px;top:548px;width:44px;height:17px;font:11px/15px 'Liberation Mono',monospace;padding-left:4px;letter-spacing:-0.4px"><span class="ss" style="top:-1px;font-size:10.500px;letter-spacing:.4px">100%</span></div><div class="dd" style="left:967px;top:548px;width:15px;height:17px"></div>
<svg class="abs" style="left:777px;top:572px" width="19" height="17"><text x="0" y="13" font-size="12" font-family="Liberation Sans,sans-serif" fill="#dcdcdc">V</text><text x="8" y="14" font-size="12" font-family="Liberation Sans,sans-serif" fill="#dcdcdc">A</text><path d="M11,1L5,16" stroke="#dcdcdc" stroke-width="1"/><path d="M10,15.500h6M12,13.500l-2,2l2,2" stroke="#dcdcdc" fill="none" stroke-width="0.900"/></svg><div class="abs" style="left:800px;top:572px;width:13px;height:17px;background:#5c5a5c;border:1px solid #2c2c2c"></div><svg class="abs" style="left:800px;top:572px" width="13" height="17"><path d="M3.500,7l3,-3.500l3,3.500zM3.500,10l3,3.500l3,-3.500z" fill="#f0f0f0"/></svg><div class="inp" style="left:812px;top:572px;width:44px;height:17px;font:11px/15px 'Liberation Mono','Noto Sans CJK SC',monospace;padding-left:4px;letter-spacing:-0.4px"><span class="ss" style="top:-1px;font-size:10.500px;letter-spacing:.4px;word-spacing:2px"><b>自动</b></span></div><div class="dd" style="left:855px;top:572px;width:15px;height:17px"></div><svg class="abs" style="left:889px;top:572px" width="19" height="17"><rect x="0.500" y="0.500" width="18" height="11" fill="#5a585a" stroke="#dcdcdc" stroke-width="0.800"/><text x="2" y="10" font-size="10" font-weight="bold" font-family="Liberation Sans,sans-serif" fill="#dcdcdc">VA</text><path d="M1,14.500h17M3,12.500l-2.500,2l2.500,2M16,12.500l2.500,2l-2.500,2" stroke="#dcdcdc" fill="none" stroke-width="1"/></svg><div class="abs" style="left:912px;top:572px;width:13px;height:17px;background:#5c5a5c;border:1px solid #2c2c2c"></div><svg class="abs" style="left:912px;top:572px" width="13" height="17"><path d="M3.500,7l3,-3.500l3,3.500zM3.500,10l3,3.500l3,-3.500z" fill="#f0f0f0"/></svg><div class="inp" style="left:924px;top:572px;width:44px;height:17px;font:11px/15px 'Liberation Mono',monospace;padding-left:4px;letter-spacing:-0.4px"><span class="ss" style="top:-1px;font-size:10.500px;letter-spacing:.4px">0</span></div><div class="dd" style="left:967px;top:572px;width:15px;height:17px"></div>
<!--/PANELS-->
</body></html>
